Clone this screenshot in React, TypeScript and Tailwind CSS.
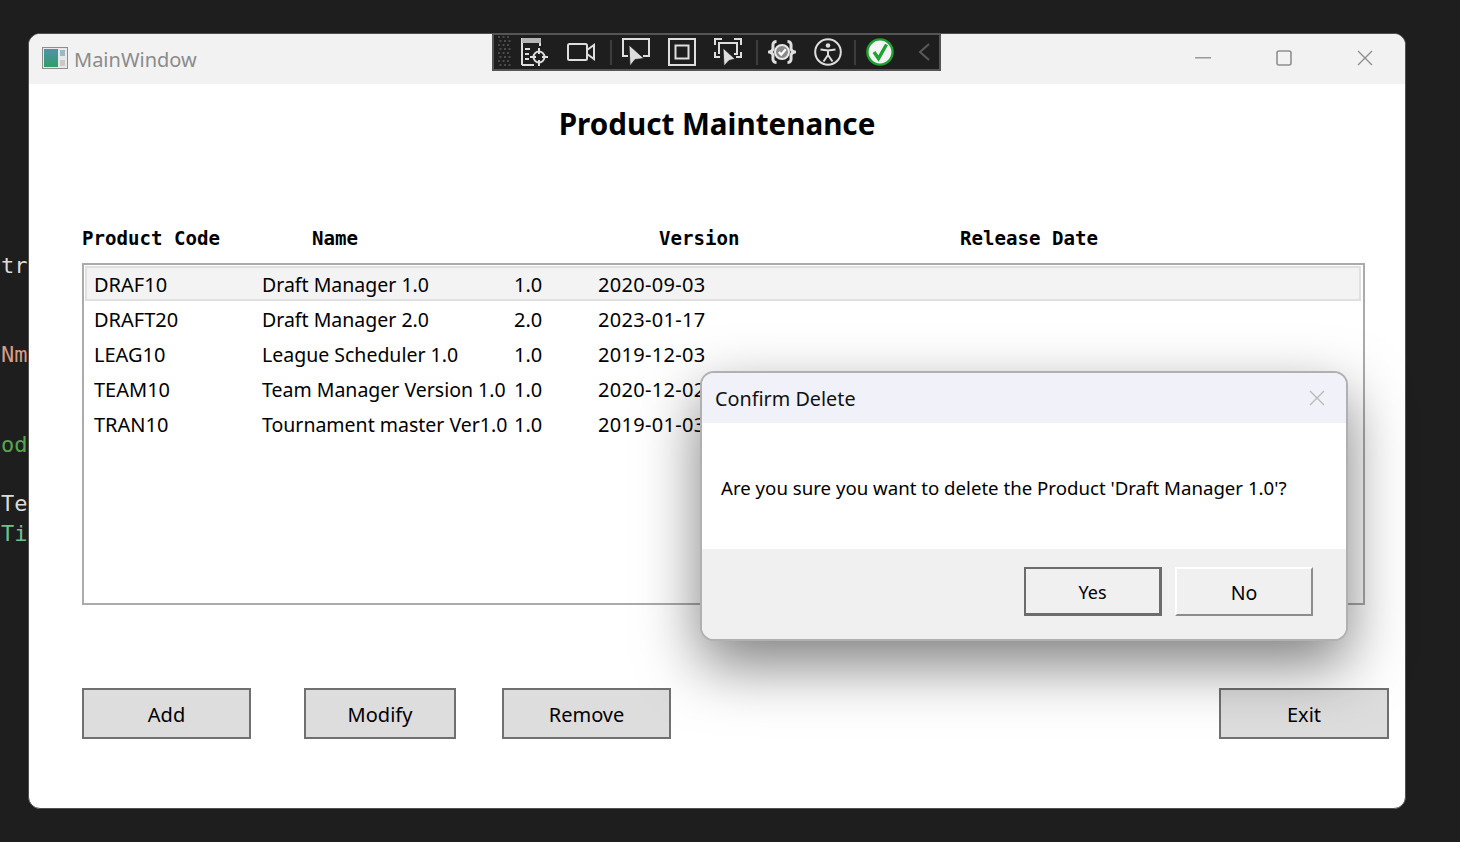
import { ReactNode } from "react";

const products = [
  { code: "DRAF10", name: "Draft Manager 1.0", version: "1.0", date: "2020-09-03" },
  { code: "DRAFT20", name: "Draft Manager 2.0", version: "2.0", date: "2023-01-17" },
  { code: "LEAG10", name: "League Scheduler 1.0", version: "1.0", date: "2019-12-03" },
  { code: "TEAM10", name: "Team Manager Version 1.0", version: "1.0", date: "2020-12-02" },
  { code: "TRAN10", name: "Tournament master Ver1.0", version: "1.0", date: "2019-01-03" },
];

// code editor peeking out behind the window
const codeLines = [
  { text: "tri", color: "text-[#dcdcdc]" },
  { text: "", color: "" },
  { text: "", color: "" },
  { text: "Nme", color: "text-[#d69d85]" },
  { text: "", color: "" },
  { text: "", color: "" },
  { text: "ode", color: "text-[#57a64a]" },
  { text: "", color: "" },
  { text: "Tex", color: "text-[#dcdcdc]" },
  { text: "Tim", color: "text-[#6fc08f]" },
];

function ToolIcon({ className, children }: { className?: string; children: ReactNode }) {
  return (
    <svg
      width="28"
      height="28"
      viewBox="0 0 28 28"
      fill="none"
      stroke="#dedede"
      strokeWidth="2"
      className={`shrink-0 ${className ?? ""}`}
    >
      {children}
    </svg>
  );
}

function Separator({ className }: { className: string }) {
  return <div className={`h-[25px] w-[2px] shrink-0 bg-[#3c3c3c] ${className}`} />;
}

function Toolbar() {
  const dots = [];
  for (let row = 0; row < 8; row++) {
    for (let col = 0; col < 3; col++) {
      dots.push(<rect key={`${row}-${col}`} x={col * 4.5 + (row % 2) * 1.5} y={row * 4} width="2" height="2" fill="#4a4a4a" stroke="none" />);
    }
  }
  return (
    <div className="absolute left-[463px] top-[-1px] z-10 flex h-[38px] w-[449px] items-center border-2 border-[#555555] bg-[#1e1e1e]">
      <svg width="13" height="32" viewBox="0 0 13 32" className="ml-[4px] shrink-0">
        {dots}
      </svg>
      <ToolIcon className="ml-[10px]">
        <path d="M1 27V1H19V8" />
        <rect x="1" y="0" width="19" height="5" fill="#b5b5b5" stroke="none" />
        <path d="M1 27H13M4 11H9M4 16H8M4 21H8" />
        <circle cx="18" cy="19" r="5.5" />
        <path d="M18 10V16M18 22V28M9 19H15M21 19H27" />
      </ToolIcon>
      <ToolIcon className="ml-[18px]">
        <rect x="1" y="6" width="19" height="16" rx="1.5" />
        <path d="M20 12L27 7V21L20 16" />
      </ToolIcon>
      <Separator className="ml-[15px]" />
      <ToolIcon className="ml-[10px]">
        <path d="M6 18H1V1H27V18H21" />
        <path d="M7 7L8 28L13 21.5L22 20.5Z" fill="#dedede" stroke="#1e1e1e" strokeWidth="0.8" />
      </ToolIcon>
      <ToolIcon className="ml-[18px]">
        <rect x="1" y="1" width="26" height="26" />
        <rect x="7.5" y="7.5" width="13" height="13" />
      </ToolIcon>
      <ToolIcon className="ml-[18px]">
        <path d="M1 7V1H8M20 1H27V7M1 14V19H6M27 14V19H22" />
        <path d="M5 16V5H23V16H20" />
        <path d="M9 10L10 28L15 22.5L21 21Z" fill="#dedede" stroke="#1e1e1e" strokeWidth="0.8" />
      </ToolIcon>
      <Separator className="ml-[14px]" />
      <ToolIcon className="ml-[10px]">
        <path d="M8.5 3.5C4 3.5 5 8 5 10.5C5 13 1.5 14 1.5 14C1.5 14 5 15 5 17.5C5 20 4 24.5 8.5 24.5" strokeWidth="3" />
        <path d="M19.5 3.5C24 3.5 23 8 23 10.5C23 13 26.5 14 26.5 14C26.5 14 23 15 23 17.5C23 20 24 24.5 19.5 24.5" strokeWidth="3" />
        <circle cx="14" cy="14" r="7" fill="#8a8a8a" stroke="#e8e8e8" />
        <path d="M10.8 14L13.2 16.6L17.8 11.2" stroke="#ffffff" strokeWidth="2.2" />
      </ToolIcon>
      <ToolIcon className="ml-[18px]">
        <circle cx="14" cy="14" r="12.8" />
        <circle cx="14" cy="7.5" r="2.3" fill="#dedede" stroke="none" />
        <path d="M6.5 11.5L14 12.5L21.5 11.5M14 12.5V17M14 17L9.5 23.5M14 17L18.5 23.5" />
      </ToolIcon>
      <Separator className="ml-[12px]" />
      <ToolIcon className="ml-[10px]">
        <circle cx="14" cy="14" r="12.6" fill="#f4f4f4" stroke="#1fa22f" strokeWidth="2.4" />
        <path d="M8 14L12.5 20.5L20.5 6.5" stroke="#1fa22f" strokeWidth="3.4" />
      </ToolIcon>
      <svg width="12" height="18" viewBox="0 0 12 18" fill="none" stroke="#5a5a5a" strokeWidth="2" className="ml-[24px] shrink-0">
        <path d="M11 1L2 9L11 17" />
      </svg>
    </div>
  );
}

function TitleBar() {
  return (
    <div className="flex h-[50px] shrink-0 items-center bg-[#f2f2f2] pb-[2px] pl-[13px]">
      <svg width="26" height="22" viewBox="0 0 26 22" className="shrink-0">
        <defs>
          <linearGradient id="pane" x1="0" y1="0" x2="0" y2="1">
            <stop offset="0" stopColor="#4f93a8" />
            <stop offset="1" stopColor="#2f9e68" />
          </linearGradient>
        </defs>
        <rect x="0.5" y="0.5" width="25" height="21" fill="#e8e8e8" stroke="#8d8d8d" />
        <rect x="2" y="2" width="14" height="18" fill="url(#pane)" />
        <rect x="18" y="3" width="5" height="6" fill="#9dbac4" />
        <rect x="18" y="13" width="5" height="6" fill="#c8c8c8" />
      </svg>
      <span className="ml-[6px] mt-[3px] text-[20px] text-[#8b8b8b]">MainWindow</span>
      <svg width="16" height="2" viewBox="0 0 16 2" className="ml-[998px] shrink-0">
        <rect width="16" height="1.5" fill="#9a9a9a" />
      </svg>
      <svg width="16" height="16" viewBox="0 0 16 16" fill="none" stroke="#8f8f8f" strokeWidth="1.6" className="ml-[65px] shrink-0">
        <rect x="1" y="1" width="14" height="14" rx="2" />
      </svg>
      <svg width="16" height="16" viewBox="0 0 16 16" fill="none" stroke="#8f8f8f" strokeWidth="1.4" className="ml-[65px] shrink-0">
        <path d="M1 1L15 15M15 1L1 15" />
      </svg>
    </div>
  );
}

function ProductRow({ product, selected }: { product: (typeof products)[number]; selected: boolean }) {
  return (
    <div
      className={`flex h-[35px] items-center pl-[7px] pt-[2px] text-black ${
        selected ? "border-2 border-[#e0e0e0] bg-[#f3f3f3]" : "border-2 border-transparent"
      }`}
    >
      <span className="w-[168px] shrink-0">{product.code}</span>
      <span className="w-[252px] shrink-0 whitespace-nowrap text-[19.5px]">{product.name}</span>
      <span className="w-[84px] shrink-0">{product.version}</span>
      <span className="whitespace-nowrap tracking-[0.3px]">{product.date}</span>
    </div>
  );
}

function ActionButton({ label, className }: { label: string; className: string }) {
  return (
    <button className={`h-[51px] shrink-0 border-2 border-[#707070] bg-[#dddddd] pt-[2px] text-[20px] text-black ${className}`}>
      {label}
    </button>
  );
}

function ConfirmDialog() {
  return (
    <div className="absolute left-[671px] top-[337px] z-20 flex h-[270px] w-[648px] flex-col overflow-hidden rounded-[14px] border-2 border-[#b0b0b0] bg-white shadow-[0_24px_60px_rgba(0,0,0,0.5)]">
      <div className="flex h-[50px] shrink-0 items-center justify-between bg-[#f0f1f9] pl-[13px] pr-[21px]">
        <span className="mt-[1px] text-[19.8px] text-[#111111]">Confirm Delete</span>
        <svg width="16" height="16" viewBox="0 0 16 16" fill="none" stroke="#b9b9b9" strokeWidth="1.4">
          <path d="M1 1L15 15M15 1L1 15" />
        </svg>
      </div>
      <div className="flex h-[126px] shrink-0 items-center pl-[19px] pt-[4px] text-[18.65px] text-black">
        Are you sure you want to delete the Product 'Draft Manager 1.0'?
      </div>
      <div className="flex flex-1 items-start justify-end gap-[13px] bg-[#f0f0f0] pr-[33px] pt-[18px]">
        <button className="h-[49px] w-[138px] border-2 border-b-[3px] border-r-[3px] border-[#6c6c6c] bg-[#f0f0f0] pt-[3px] text-[18px] text-black">
          Yes
        </button>
        <button className="h-[49px] w-[138px] border-2 border-b-[#8c8c8c] border-l-white border-r-[#8c8c8c] border-t-white bg-[#f0f0f0] pt-[2px] text-[19.5px] text-black">
          No
        </button>
      </div>
    </div>
  );
}

export default function App() {
  return (
    <div className="flex h-[842px] w-[1460px] overflow-hidden bg-[#1e1e1e] font-['Noto_Sans',sans-serif]">
      <div className="w-[28px] shrink-0 overflow-hidden pt-[251px] font-['DejaVu_Sans_Mono',monospace] text-[22px] leading-[29.75px]">
        {codeLines.map((line, i) => (
          <div key={i} className={`h-[29.75px] whitespace-nowrap pl-[1px] ${line.color}`}>
            {line.text}
          </div>
        ))}
      </div>

      <div className="relative mt-[33px] flex h-[776px] w-[1378px] shrink-0 flex-col rounded-[12px] border border-[#505050] bg-white">
        <div className="overflow-hidden rounded-t-[11px]">
          <TitleBar />
        </div>
        <Toolbar />

        <div className="flex h-[80px] shrink-0 items-center justify-center">
          <h1 className="text-[29.6px] font-bold text-black">Product Maintenance</h1>
        </div>

        <div className="flex h-[99px] shrink-0 items-end pb-[12px] pl-[53px] font-['DejaVu_Sans_Mono',monospace] text-[19.1px] font-bold leading-[24px] text-black">
          <span className="w-[230px] shrink-0">Product Code</span>
          <span className="w-[347px] shrink-0">Name</span>
          <span className="w-[301px] shrink-0">Version</span>
          <span>Release Date</span>
        </div>

        <div className="ml-[53px] h-[342px] w-[1283px] shrink-0 overflow-hidden border-2 border-[#ababab] py-[1px] pl-[1px] pr-[2px] text-[20px]">
          {products.map((p, i) => (
            <ProductRow key={p.code} product={p} selected={i === 0} />
          ))}
        </div>

        <div className="mt-[83px] flex pl-[53px]">
          <ActionButton label="Add" className="w-[169px]" />
          <ActionButton label="Modify" className="ml-[53px] w-[152px]" />
          <ActionButton label="Remove" className="ml-[46px] w-[169px]" />
          <ActionButton label="Exit" className="ml-[548px] w-[170px]" />
        </div>

        <ConfirmDialog />
      </div>
    </div>
  );
}
